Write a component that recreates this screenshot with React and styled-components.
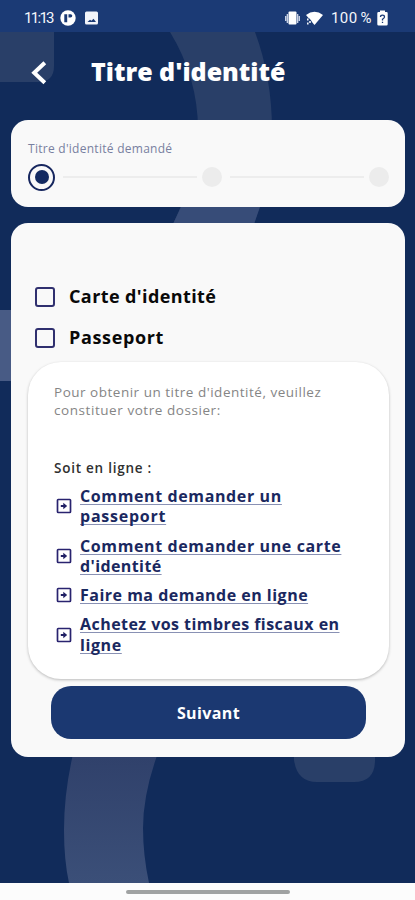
import React from 'react';
import styled, { createGlobalStyle } from 'styled-components';

const GlobalStyle = createGlobalStyle`
  * {
    box-sizing: border-box;
  }
  body {
    margin: 0;
    background: #112b5a;
    font-family: 'Open Sans', 'Noto Sans', sans-serif;
  }
`;

const Screen = styled.div`
  position: relative;
  width: 415px;
  height: 900px;
  overflow: hidden;
  display: flex;
  flex-direction: column;
  background: #112b5a;
`;

const Backdrop = styled.svg`
  position: absolute;
  top: 0;
  left: 0;
`;

const StatusBar = styled.div`
  position: relative;
  height: 32px;
  flex: none;
  display: flex;
  align-items: center;
  justify-content: space-between;
  padding: 4px 27px 0 24px;
  background: #1b3a75;
  color: #f4f6fb;
  font-family: Roboto, sans-serif;
  font-size: 15px;
  line-height: 18px;
`;

const StatusGroup = styled.div`
  display: flex;
  align-items: center;
  gap: ${({ gap }) => gap}px;
`;

const Clock = styled.span`
  width: 27px;
  letter-spacing: -1.7px;
  white-space: nowrap;
`;

const Battery = styled.span`
  width: 40px;
  margin-left: 2px;
  letter-spacing: 0.4px;
  word-spacing: -1px;
  white-space: nowrap;
`;

const Header = styled.header`
  position: relative;
  height: 88px;
  flex: none;
  display: flex;
  align-items: flex-start;
  padding: 22px 0 0 31px;
  color: #fff;
`;

const BackIcon = styled.svg`
  margin-top: 6px;
`;

const Title = styled.h1`
  margin: -1px 0 0 43px;
  font-size: 25px;
  font-weight: 800;
  line-height: 36px;
  white-space: nowrap;
`;

const Card = styled.section`
  position: relative;
  flex: none;
  margin: 0 10px 0 11px;
  border-radius: 17px;
  background: #f9f9f9;
`;

const StepCard = styled(Card)`
  height: 87px;
  padding: 20px 16px 0 17px;
`;

const StepLabel = styled.div`
  font-size: 12px;
  line-height: 18px;
  color: #7880a0;
  white-space: nowrap;
  letter-spacing: 0.27px;
`;

const Steps = styled.div`
  display: flex;
  align-items: center;
  height: 28px;
  margin-top: 5px;
`;

const CurrentStep = styled.div`
  width: 27px;
  height: 27px;
  padding: 4.5px;
  border: 2px solid #17275f;
  border-radius: 50%;

  &::after {
    content: '';
    display: block;
    width: 14px;
    height: 14px;
    border-radius: 50%;
    background: #132a62;
  }
`;

const NextStep = styled.div`
  width: 20px;
  height: 20px;
  border-radius: 50%;
  background: #ececec;
`;

const StepLine = styled.div`
  flex: 1;
  height: 2px;
  margin: 0 5px 0 8px;
  background: #ededed;
`;

const FormCard = styled(Card)`
  height: 534px;
  margin-top: 16px;
  padding: 53px 16px 0 17px;
`;

const Option = styled.label`
  display: flex;
  align-items: center;
  height: 41px;
  padding-left: 7px;
  font-size: 18px;
  font-weight: 700;
  color: #090909;
  letter-spacing: ${({ spacing }) => spacing}px;
  white-space: nowrap;
`;

const OptionText = styled.span`
  margin-top: -2px;
`;

const Checkbox = styled.span`
  width: 20px;
  height: 20px;
  margin-right: 14px;
  border: 2px solid #30306f;
  border-radius: 3px;
`;

const InfoCard = styled.div`
  height: 317px;
  margin-top: 4px;
  padding: 21px 26px 0;
  border-radius: 33px;
  background: #fff;
  box-shadow: 0 1px 3px rgba(0, 0, 0, 0.26);
`;

const Intro = styled.p`
  margin: 0;
  font-size: 13.5px;
  line-height: 18px;
  color: #858585;
  white-space: nowrap;
`;

const IntroLine = styled.span`
  display: block;
  letter-spacing: ${({ spacing }) => spacing}px;
`;

const Subtitle = styled.h2`
  margin: 39px 0 8px;
  font-size: 13.5px;
  font-weight: 600;
  line-height: 20px;
  color: #303030;
  letter-spacing: 0.75px;
`;

const LinkRow = styled.div`
  display: flex;
  align-items: center;
  margin-bottom: 9px;
  padding-left: 2px;
`;

const LinkIcon = styled.svg`
  flex: none;
  margin: 0 8px 0 0;
`;

const LinkText = styled.a`
  font-size: 16px;
  font-weight: 700;
  line-height: 20.3px;
  color: #1a2860;
  white-space: nowrap;
`;

const LinkLine = styled.span`
  display: block;
  width: fit-content;
  text-decoration: underline;
  text-decoration-color: #8991b4;
  text-decoration-thickness: 1px;
  text-underline-offset: 2px;
  text-decoration-skip-ink: none;
  letter-spacing: ${({ spacing }) => spacing}px;
`;

const NextButton = styled.button`
  display: block;
  width: 315px;
  height: 53px;
  margin: 7px 0 0 23px;
  padding: 0;
  border: 0;
  border-radius: 20px;
  background: #1b3871;
  color: #fff;
  font: 700 16px 'Open Sans', sans-serif;
  letter-spacing: 0.4px;
`;

const NavBar = styled.div`
  position: relative;
  height: 17px;
  flex: none;
  margin-top: auto;
  padding-top: 7px;
  background: #fcfcfc;
`;

const NavHandle = styled.div`
  width: 164px;
  height: 4px;
  margin-left: 126px;
  border-radius: 2px;
  background: #a0a2a2;
`;

const links = [
  [['Comment demander un', 0.62], ['passeport', 0.75]],
  [['Comment demander une carte', 0.62], ["d'identité", 0.4]],
  [['Faire ma demande en ligne', 0.49]],
  [['Achetez vos timbres fiscaux en', 0.45], ['ligne', 0.6]],
];

const Shapes = () => (
  <Backdrop width="415" height="900" viewBox="0 0 415 900">
    <defs>
      <linearGradient id="band" x1="0" y1="757" x2="0" y2="883" gradientUnits="userSpaceOnUse">
        <stop offset="0" stopColor="#30416b" />
        <stop offset="1" stopColor="#3b4f78" />
      </linearGradient>
    </defs>
    <path d="M0 32H54V66Q54 82 38 82H0Z" fill="#293f68" />
    <path
      d="M170 32Q198 78 198 130Q198 172 173 224H254Q272 170 272 130Q272 78 255 32Z"
      fill="#293f68"
    />
    <path d="M181 207L173 224H254L260 207Z" fill="#374c78" />
    <path d="M0 310H12V381H0Z" fill="#485b85" />
    <path
      d="M74 750Q64 791 64 830Q64 860 69 883H149Q143 855 143 828Q143 793 159 750Z"
      fill="url(#band)"
    />
    <path d="M294 750V760Q297 782 317 782H354Q375 782 375 760V750Z" fill="#293f68" />
  </Backdrop>
);

const ArrowBox = () => (
  <LinkIcon width="16" height="16" viewBox="0 0 16 16">
    <rect x="1.5" y="1.5" width="13" height="13" rx="0.7" fill="none" stroke="#29236f" strokeWidth="1.7" />
    <path d="M4.8 7H7.3V4.8L11.2 8L7.3 11.2V9H4.8Z" fill="#202064" />
  </LinkIcon>
);

const App = () => (
  <Screen>
    <GlobalStyle />
    <Shapes />
    <StatusBar>
      <StatusGroup gap={9}>
        <Clock>11:13</Clock>
        <svg width="16" height="16" viewBox="0 0 16 16">
          <circle cx="8" cy="8" r="7.7" fill="#fff" />
          <path d="M4.3 4.2H7.2V12.2H4.3ZM8.5 4.2H10.6Q12.3 4.2 12.3 5.8Q12.3 7.6 10.5 7.6H8.5Z" fill="#1b3a75" />
        </svg>
        <svg width="13" height="14" viewBox="0 0 13 14">
          <rect y="0.5" width="13" height="13" rx="1.5" fill="#f2f4fa" />
          <path d="M2.5 11L5 8.8L6.5 9.8L8.5 7.8L11 11Z" fill="#1b3a75" />
        </svg>
      </StatusGroup>
      <StatusGroup gap={6}>
        <svg width="15" height="14" viewBox="0 0 15 14">
          <rect x="3.5" y="0.5" width="8" height="13" rx="1" fill="#fff" />
          <path d="M0.7 5V10M2.3 3V12M12.7 3V12M14.3 5V10" stroke="#dce3f2" strokeWidth="1.2" />
        </svg>
        <svg width="17" height="14" viewBox="0 0 17 14">
          <path d="M0 4Q8.5 -2.5 17 4L8.5 14Z" fill="#fff" />
          <path d="M0 7.5H3.5L5.5 10V14H0Z" fill="#1b3a75" />
          <path d="M1.8 7.5V9.5M1.8 11.5V13.5M4 10V12" stroke="#fff" strokeWidth="1.5" />
        </svg>
        <Battery>100 %</Battery>
        <svg width="11" height="16" viewBox="0 0 11 16">
          <path
            d="M3 0.5H8V2H9.5Q10.7 2 10.7 3.2V14.2Q10.7 15.5 9.4 15.5H1.6Q0.3 15.5 0.3 14.2V3.2Q0.3 2 1.5 2H3Z"
            fill="#fff"
          />
          <path d="M3.5 7Q3.5 5.2 5.5 5.2Q7.5 5.2 7.5 7Q7.5 8 5.5 9.2V10.5M5.5 11.7V13" fill="none" stroke="#1b3a75" strokeWidth="1.3" />
        </svg>
      </StatusGroup>
    </StatusBar>
    <Header>
      <BackIcon width="17" height="26" viewBox="0 0 17 26">
        <path d="M13.8 2.7L3.2 12.8L13.8 22.8" fill="none" stroke="#fff" strokeWidth="4" />
      </BackIcon>
      <Title>Titre d'identité</Title>
    </Header>
    <StepCard>
      <StepLabel>Titre d'identité demandé</StepLabel>
      <Steps>
        <CurrentStep />
        <StepLine />
        <NextStep />
        <StepLine />
        <NextStep />
      </Steps>
    </StepCard>
    <FormCard>
      <Option spacing={0.4}>
        <Checkbox />
        <OptionText>Carte d'identité</OptionText>
      </Option>
      <Option spacing={0.65}>
        <Checkbox />
        <OptionText>Passeport</OptionText>
      </Option>
      <InfoCard>
        <Intro>
          <IntroLine spacing={0.51}>Pour obtenir un titre d'identité, veuillez</IntroLine>
          <IntroLine spacing={0.56}>constituer votre dossier:</IntroLine>
        </Intro>
        <Subtitle>Soit en ligne :</Subtitle>
        {links.map((lines) => (
          <LinkRow key={lines[0][0]}>
            <ArrowBox />
            <LinkText>
              {lines.map(([text, spacing]) => (
                <LinkLine key={text} spacing={spacing}>
                  {text}
                </LinkLine>
              ))}
            </LinkText>
          </LinkRow>
        ))}
      </InfoCard>
      <NextButton>Suivant</NextButton>
    </FormCard>
    <NavBar>
      <NavHandle />
    </NavBar>
  </Screen>
);

export default App;
